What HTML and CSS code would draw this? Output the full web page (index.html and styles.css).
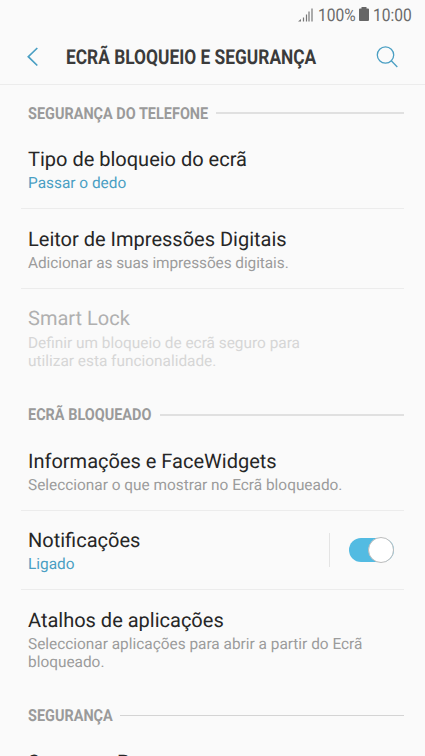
FILE: index.html
```
<!DOCTYPE html>
<html lang="pt">
<head>
<meta charset="utf-8">
<title>Ecrã bloqueio e segurança</title>
<link rel="stylesheet" href="styles.css">
</head>
<body>
<div class="status">
  <svg class="signal" width="15" height="14" viewBox="0 0 15 14"><path d="M0 13.500 3 11v2.500z" fill="#777"/><path d="M5.500 9.500v4M8.500 6.500v7M11 3.500v10M14 .5v13" stroke="#777" stroke-width="1.200"/></svg>
  <span class="percent"><span class="narrow">100%</span></span>
  <svg class="battery" width="10" height="14" viewBox="0 0 10 14"><path d="M2.500 0h5v1.500H9q1 0 1 1V13q0 1-1 1H1q-1 0-1-1V2.500q0-1 1-1h1.500z" fill="#666"/></svg>
  <span class="time"><span class="narrow">10:00</span></span>
</div>
<header class="bar">
  <svg class="back" width="12" height="20" viewBox="0 0 12 20"><path d="M11.300 1 2.300 9.700l9 8.800" fill="none" stroke="#4a9fc3" stroke-width="1.700"/></svg>
  <h1><span class="fit">ECRÃ BLOQUEIO E SEGURANÇA</span></h1>
  <svg class="search" width="22" height="22" viewBox="0 0 22 22"><g fill="none" stroke="#4a9fc3" stroke-width="1.300"><circle cx="9.500" cy="9" r="8.200"/><path d="m15.300 14.800 6 6.200"/></g></svg>
</header>
<main>
  <h2 class="phone"><span>SEGURANÇA DO TELEFONE</span></h2>
  <section class="row"><h3>Tipo de bloqueio do ecrã</h3><p class="on">Passar o dedo</p></section>
  <section class="row"><h3>Leitor de Impressões Digitais</h3><p class="tight">Adicionar as suas impressões digitais.</p></section>
  <section class="row tall off"><h3>Smart Lock</h3><p>Definir um bloqueio de ecrã seguro para<br>utilizar esta funcionalidade.</p></section>
  <h2 class="locked"><span>ECRÃ BLOQUEADO</span></h2>
  <section class="row"><h3>Informações e FaceWidgets</h3><p>Seleccionar o que mostrar no Ecrã bloqueado.</p></section>
  <section class="row split"><div><h3>Notificações</h3><p class="on">Ligado</p></div><div class="control"><span class="switch"><i></i></span></div></section>
  <section class="row tall"><h3>Atalhos de aplicações</h3><p>Seleccionar aplicações para abrir a partir do Ecrã<br>bloqueado.</p></section>
  <h2 class="security"><span>SEGURANÇA</span></h2>
  <section class="row"><h3>Samsung Pass</h3></section>
</main>
</body>
</html>
```
FILE: styles.css
```
* { box-sizing: border-box; }
html { height: 756px; overflow: hidden; }
body { margin: 0; height: 756px; overflow: hidden; background: #fafafa; color: #262626; font-family: Roboto, sans-serif; text-rendering: geometricPrecision; }
h1, h2, h3, p { margin: 0; font-weight: 400; }
svg { display: block; flex: none; }
.status { height: 30px; padding-left: 298px; display: flex; align-items: center; font-size: 17.5px; color: #6a6a6a; white-space: nowrap; }
.signal { margin-top: -1px; }
.percent { width: 41px; margin-left: 5px; padding-top: 1px; }
.battery { margin-top: -2px; }
.time { margin-left: 4px; padding-top: 1px; }
.narrow { display: inline-block; transform: scaleX(.89); transform-origin: left; }
.bar { height: 55px; padding: 0 27px 0 26px; display: flex; align-items: center; border-bottom: 1px solid #ececec; }
.bar h1 { flex: 1; margin-left: 28px; padding-top: 2px; font-size: 20.5px; font-weight: 700; color: #3b3b3b; white-space: nowrap; }
.fit { display: inline-block; transform: scaleX(.846); transform-origin: left; }
main { padding: 0 21px; }
h2 { display: flex; align-items: center; height: 44px; padding: 12px 0 0 7px; font-size: 16.5px; line-height: 20px; font-weight: 700; color: #9a9a9a; white-space: nowrap; }
h2 span { display: block; flex: none; margin-right: 7px; padding-top: 2px; transform: scaleX(.876); transform-origin: left; }
h2::after { content: ""; flex: 1; height: 2px; margin-top: -1px; background: #e0e0e0; }
.phone span { width: 181px; padding-top: 3px; }
.locked span { width: 125px; }
.security span { width: 85px; }
.security::after { height: 1px; background: #d4d4d4; }
.row { height: 80px; padding: 17px 7px 0; border-bottom: 1px solid #ececec; }
.row h3 { font-size: 20px; line-height: 26px; white-space: nowrap; }
.row p { font-size: 15.4px; line-height: 18px; margin-top: 2px; color: #9c9c9c; white-space: nowrap; }
.row .on { color: #4a9fc3; }
.row .tight { letter-spacing: -.07px; }
.row.tall { height: 98px; border: 0; }
.row.off { padding-top: 16px; }
.row.off h3 { color: #b0b0b0; }
.row.off p { margin-top: 3px; color: #d6d6d6; }
.row.split { height: 79px; padding-top: 16px; display: flex; justify-content: space-between; }
.control { width: 68px; height: 34px; margin: 6px 0 0; border-left: 1px solid #e4e4e4; padding: 5px 0 0 19px; }
.switch { display: flex; justify-content: flex-end; align-items: center; width: 45px; height: 24px; border-radius: 12px; background: #53bbe2; }
.switch i { width: 26px; height: 26px; flex: none; border: 1px solid #bcbcbc; border-radius: 50%; background: #fff; }
```
